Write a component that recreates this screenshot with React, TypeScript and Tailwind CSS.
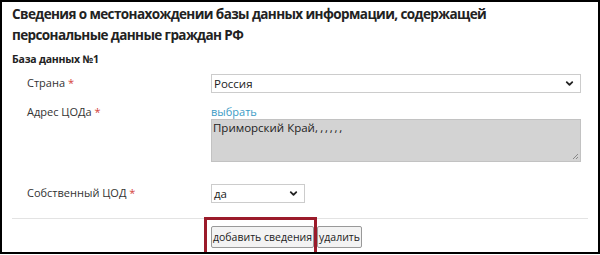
import { ChevronDown } from "lucide-react";

// one row of the form: label on the left, field on the right
function Row({ label, children, className }: { label: string; children: React.ReactNode; className?: string }) {
  return (
    <div className={"flex " + (className ?? "")}>
      <div className="w-[184px] shrink-0 text-[11px] text-[#333]">
        {label} <span className="text-[#d43f3a]">*</span>
      </div>
      <div>{children}</div>
    </div>
  );
}

export default function App() {
  return (
    <div className="w-[600px] h-[255px] bg-white" style={{ fontFamily: '"Open Sans", "Noto Sans", sans-serif' }}>
      <div className="h-[254px] border-2 border-black flex flex-col">
        {/* heading */}
        <h1 className="pl-[10px] pt-[2px] text-[13.5px] font-bold leading-[21px] tracking-[-0.6px] text-[#222]">
          Сведения о местонахождении базы данных информации, содержащей
          <br />
          персональные данные граждан РФ
        </h1>

        <div className="pl-[10px] mt-[6px] text-[10.5px] font-bold tracking-[-0.2px] text-[#222]">База данных №1</div>

        {/* form rows */}
        <div className="pl-[25px] mt-[6px] flex flex-col">
          <Row label="Страна" className="items-center">
            <div className="w-[370px] h-[19px] border border-[#ccc] flex items-center justify-between pl-[2px] pr-[5px] text-[11.5px] text-[#222]">
              <span>Россия</span>
              <ChevronDown size={11} strokeWidth={4} />
            </div>
          </Row>

          <Row label="Адрес ЦОДа" className="mt-[11px]">
            <div className="text-[11px] leading-[15px] text-[#3a9bc5]">выбрать</div>
            <div className="relative w-[370px] h-[43px] bg-[#d3d3d3] border border-[#c2c2c2] pl-[1px] text-[11.5px] leading-[16px] text-[#222]">
              Приморский Край,<span className="tracking-[-0.6px]"> , , , , ,</span>
              <svg className="absolute right-[1px] bottom-[1px]" width="7" height="7" viewBox="0 0 7 7">
                <path d="M6 1 L1 6 M6 4 L4 6" stroke="#888" strokeWidth="1" />
              </svg>
            </div>
          </Row>

          <Row label="Собственный ЦОД" className="items-center mt-[22px]">
            <div className="w-[94px] h-[19px] border border-[#ccc] flex items-center justify-between pl-[2px] pr-[5px] text-[11.5px] text-[#222]">
              <span>да</span>
              <ChevronDown size={11} strokeWidth={4} />
            </div>
          </Row>
        </div>

        {/* divider */}
        <div className="mx-[10px] mt-[15px] border-t border-[#e3e3e3]" />

        {/* buttons */}
        <div className="flex pl-[202px] flex-1 -mt-[2px]">
          <div className="border-[3px] border-b-0 border-[#9b1b2a] pt-[3px] pl-[4px] pr-0">
            <button className="h-[22px] px-[1px] border border-[#999] rounded-[2px] bg-[#f3f3f3] text-[10.5px] leading-[18px] text-[#222]">
              добавить сведения
            </button>
          </div>
          <div className="pt-[6px]">
            <button className="h-[22px] px-[1px] border border-[#999] rounded-[2px] bg-[#f3f3f3] text-[10.5px] leading-[18px] text-[#222]">
              удалить
            </button>
          </div>
        </div>
      </div>
    </div>
  );
}
